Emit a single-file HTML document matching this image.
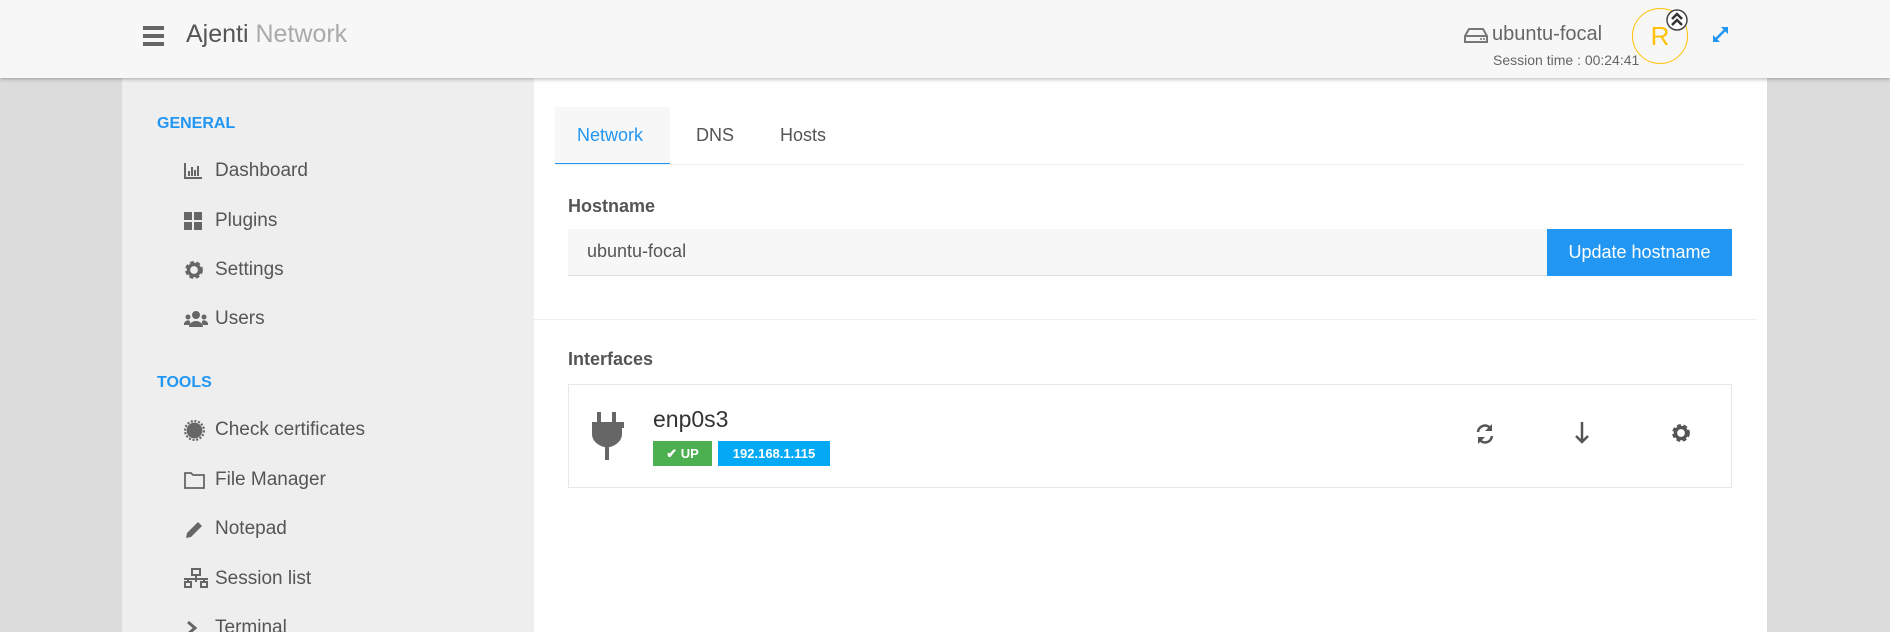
<!DOCTYPE html>
<html style="overflow:hidden;height:632px"><head><meta charset="utf-8"><style>
*{box-sizing:border-box;margin:0;padding:0}
body{width:1890px;height:632px;overflow:hidden;background:#dcdcdc;font-family:"Liberation Sans",sans-serif;color:#555;position:relative}
.hdr{position:absolute;left:0;top:0;width:1890px;height:78px;background:#f7f7f7;box-shadow:0 1px 4px rgba(0,0,0,.3);z-index:5}
.side{position:absolute;left:122px;top:78px;width:412px;height:554px;background:#eeeeee;overflow:hidden}
.main{position:absolute;left:534px;top:78px;width:1233px;height:554px;background:#fff}
.a{position:absolute;white-space:nowrap}
.sec{color:#2196f3;font-weight:bold;font-size:16px}
.it{font-size:19px;color:#555;line-height:20px}
</style></head><body>
<div class="hdr">
 <div class="a" style="left:143px;top:26px;width:21px;height:4px;background:#666;box-shadow:0 8px 0 #666,0 16px 0 #666"></div>
 <div class="a" style="left:186px;top:20px;font-size:25px;color:#555">Ajenti <span style="color:#aaa">Network</span></div>
 <svg class="a" style="left:1464px;top:27px" width="24" height="17" viewBox="0 0 24 17"><path d="M5 2h14l4 7v6H1V9z M1 9h22" fill="none" stroke="#777" stroke-width="2"/><circle cx="17" cy="12" r="1" fill="#777"/><circle cx="20" cy="12" r="1" fill="#777"/></svg>
 <div class="a" style="left:1492px;top:23px;font-size:20px;color:#666">ubuntu-focal</div>
 <div class="a" style="left:1493px;top:52px;font-size:14px;color:#666">Session time : 00:24:41</div>
 <div class="a" style="left:1632px;top:8px;width:56px;height:56px;border:1px solid #ffc107;border-radius:50%;color:#ffc107;font-size:26px;text-align:center;line-height:54px">R</div>
 <svg class="a" style="left:1666px;top:9px" width="22" height="22" viewBox="0 0 22 22"><circle cx="11" cy="11" r="10" fill="#fff" stroke="#444" stroke-width="1.5"/><path d="M6 10l5-5 5 5M6 16l5-5 5 5" fill="none" stroke="#333" stroke-width="2.5"/></svg>
 <svg class="a" style="left:1711px;top:25px" width="19" height="19" viewBox="0 0 19 19"><path d="M3 16L16 3" stroke="#2196f3" stroke-width="2.5"/><path d="M10 2h7v7z M2 10v7h7z" fill="#2196f3"/></svg>
</div>
<div class="side">
 <div class="a sec" style="left:35px;top:37px">GENERAL</div>
 <div class="a sec" style="left:35px;top:296px">TOOLS</div>
 <div class="a it" style="left:93px;top:83px">Dashboard</div>
 <div class="a it" style="left:93px;top:133px">Plugins</div>
 <div class="a it" style="left:93px;top:182px">Settings</div>
 <div class="a it" style="left:93px;top:231px">Users</div>
 <div class="a it" style="left:93px;top:342px">Check certificates</div>
 <div class="a it" style="left:93px;top:392px">File Manager</div>
 <div class="a it" style="left:93px;top:441px">Notepad</div>
 <div class="a it" style="left:93px;top:491px">Session list</div>
 <div class="a it" style="left:93px;top:540px">Terminal</div>
 <svg class="a" style="left:62px;top:85px" width="18" height="16"><path d="M1 0v15h17M5 8v5M8 4v9M11 7v6M14 3v10" stroke="#666" stroke-width="2" fill="none"/></svg>
 <svg class="a" style="left:62px;top:134px" width="18" height="18"><rect x="0" y="0" width="8" height="8" fill="#666"/><rect x="10" y="0" width="8" height="8" fill="#666"/><rect x="0" y="10" width="8" height="8" fill="#666"/><rect x="10" y="10" width="8" height="8" fill="#666"/></svg>
 <svg class="a" style="left:62px;top:182px" width="20" height="20" viewBox="0 0 18 18"><circle cx="9" cy="9" r="6" fill="none" stroke="#666" stroke-width="4" stroke-dasharray="3 2"/><circle cx="9" cy="9" r="5" fill="none" stroke="#666" stroke-width="3"/></svg>
 <svg class="a" style="left:62px;top:232px" width="24" height="18" viewBox="0 0 24 18"><circle cx="12" cy="5" r="4" fill="#666"/><circle cx="4" cy="7" r="2.5" fill="#666"/><circle cx="20" cy="7" r="2.5" fill="#666"/><path d="M5 17a7 6 0 0 1 14 0z M0 15a4 4 0 0 1 6-4v4z M24 15a4 4 0 0 0-6-4v4z" fill="#666"/></svg>
 <svg class="a" style="left:62px;top:342px" width="21" height="21" viewBox="0 0 20 20"><circle cx="10" cy="10" r="7.5" fill="#666"/><circle cx="10" cy="10" r="9" fill="none" stroke="#666" stroke-width="2" stroke-dasharray="2 1.5"/></svg>
 <svg class="a" style="left:62px;top:394px" width="21" height="17"><path d="M1 1h6l2 2h11v13H1z" fill="none" stroke="#666" stroke-width="1.8"/></svg>
 <svg class="a" style="left:62px;top:441px" width="21" height="21"><path d="M2 19l1-5L14 3l4 4L7 18z" fill="#666"/></svg>
 <svg class="a" style="left:62px;top:490px" width="25" height="21"><rect x="8" y="1" width="8" height="6" fill="none" stroke="#666" stroke-width="2"/><path d="M12 7v4M0 11h24M4 11v3M20 11v3M12 11v3" stroke="#666" stroke-width="2"/><rect x="1" y="14" width="6" height="5" fill="none" stroke="#666" stroke-width="2"/><rect x="17" y="14" width="6" height="5" fill="none" stroke="#666" stroke-width="2"/></svg>
 <svg class="a" style="left:64px;top:542px" width="12" height="16"><path d="M2 2l7 6-7 6" stroke="#666" stroke-width="3" fill="none"/></svg>
</div>
<div class="main">
 <div class="a" style="left:21px;top:29px;width:115px;height:58px;background:#f7f7f7;border-bottom:2px solid #2196f3"></div>
 <div class="a" style="left:21px;top:86px;width:1190px;height:1px;background:#eee"></div>
 <div class="a" style="left:43px;top:47px;font-size:18px;color:#2196f3">Network</div>
 <div class="a" style="left:162px;top:47px;font-size:18px;color:#555">DNS</div>
 <div class="a" style="left:246px;top:47px;font-size:18px;color:#555">Hosts</div>
 <div class="a" style="left:34px;top:118px;font-size:18px;font-weight:bold;color:#555">Hostname</div>
 <div class="a" style="left:34px;top:151px;width:979px;height:47px;background:#f7f7f7;border-bottom:1px solid #ddd"></div>
 <div class="a" style="left:53px;top:163px;font-size:18px;color:#555">ubuntu-focal</div>
 <div class="a" style="left:1013px;top:151px;width:185px;height:47px;background:#2196f3;color:#fff;font-size:18px;text-align:center;line-height:47px">Update hostname</div>
 <div class="a" style="left:0;top:241px;width:1223px;height:1px;background:#eee"></div>
 <div class="a" style="left:34px;top:271px;font-size:18px;font-weight:bold;color:#555">Interfaces</div>
 <div class="a" style="left:34px;top:306px;width:1164px;height:104px;border:1px solid #e8e8e8"></div>
 <svg class="a" style="left:56px;top:334px" width="36" height="48" viewBox="0 0 36 48"><rect x="7" y="0" width="4" height="10" fill="#666"/><rect x="22" y="0" width="4" height="10" fill="#666"/><path d="M2 10h32v6h-2v6c0 8-8 12-12 13h-6c-4-1-12-5-12-13v-6H2z" fill="#666"/><rect x="15" y="34" width="4" height="14" fill="#666"/></svg>
 <div class="a" style="left:119px;top:328px;font-size:23px;color:#333">enp0s3</div>
 <div class="a" style="left:119px;top:363px;width:59px;height:25px;background:#4caf50;color:#fff;font-size:13px;font-weight:bold;text-align:center;line-height:25px">✔ UP</div>
 <div class="a" style="left:184px;top:363px;width:112px;height:25px;background:#03a9f4;color:#fff;font-size:13px;font-weight:bold;text-align:center;line-height:25px">192.168.1.115</div>
 <svg class="a" style="left:941px;top:345px" width="20" height="22" viewBox="0 0 20 22"><path d="M3 9a7 7 0 0 1 13-3M17 13a7 7 0 0 1-13 3" fill="none" stroke="#555" stroke-width="2.5"/><path d="M17 1v7h-7z M3 21v-7h7z" fill="#555"/></svg>
 <svg class="a" style="left:1040px;top:343px" width="16" height="24"><path d="M8 1v20M2 15l6 6 6-6" stroke="#555" stroke-width="2.5" fill="none"/></svg>
 <svg class="a" style="left:1137px;top:345px" width="20" height="20" viewBox="0 0 18 18"><circle cx="9" cy="9" r="6" fill="none" stroke="#555" stroke-width="4" stroke-dasharray="3 2"/><circle cx="9" cy="9" r="5" fill="none" stroke="#555" stroke-width="3"/></svg>
</div>
</body></html>
